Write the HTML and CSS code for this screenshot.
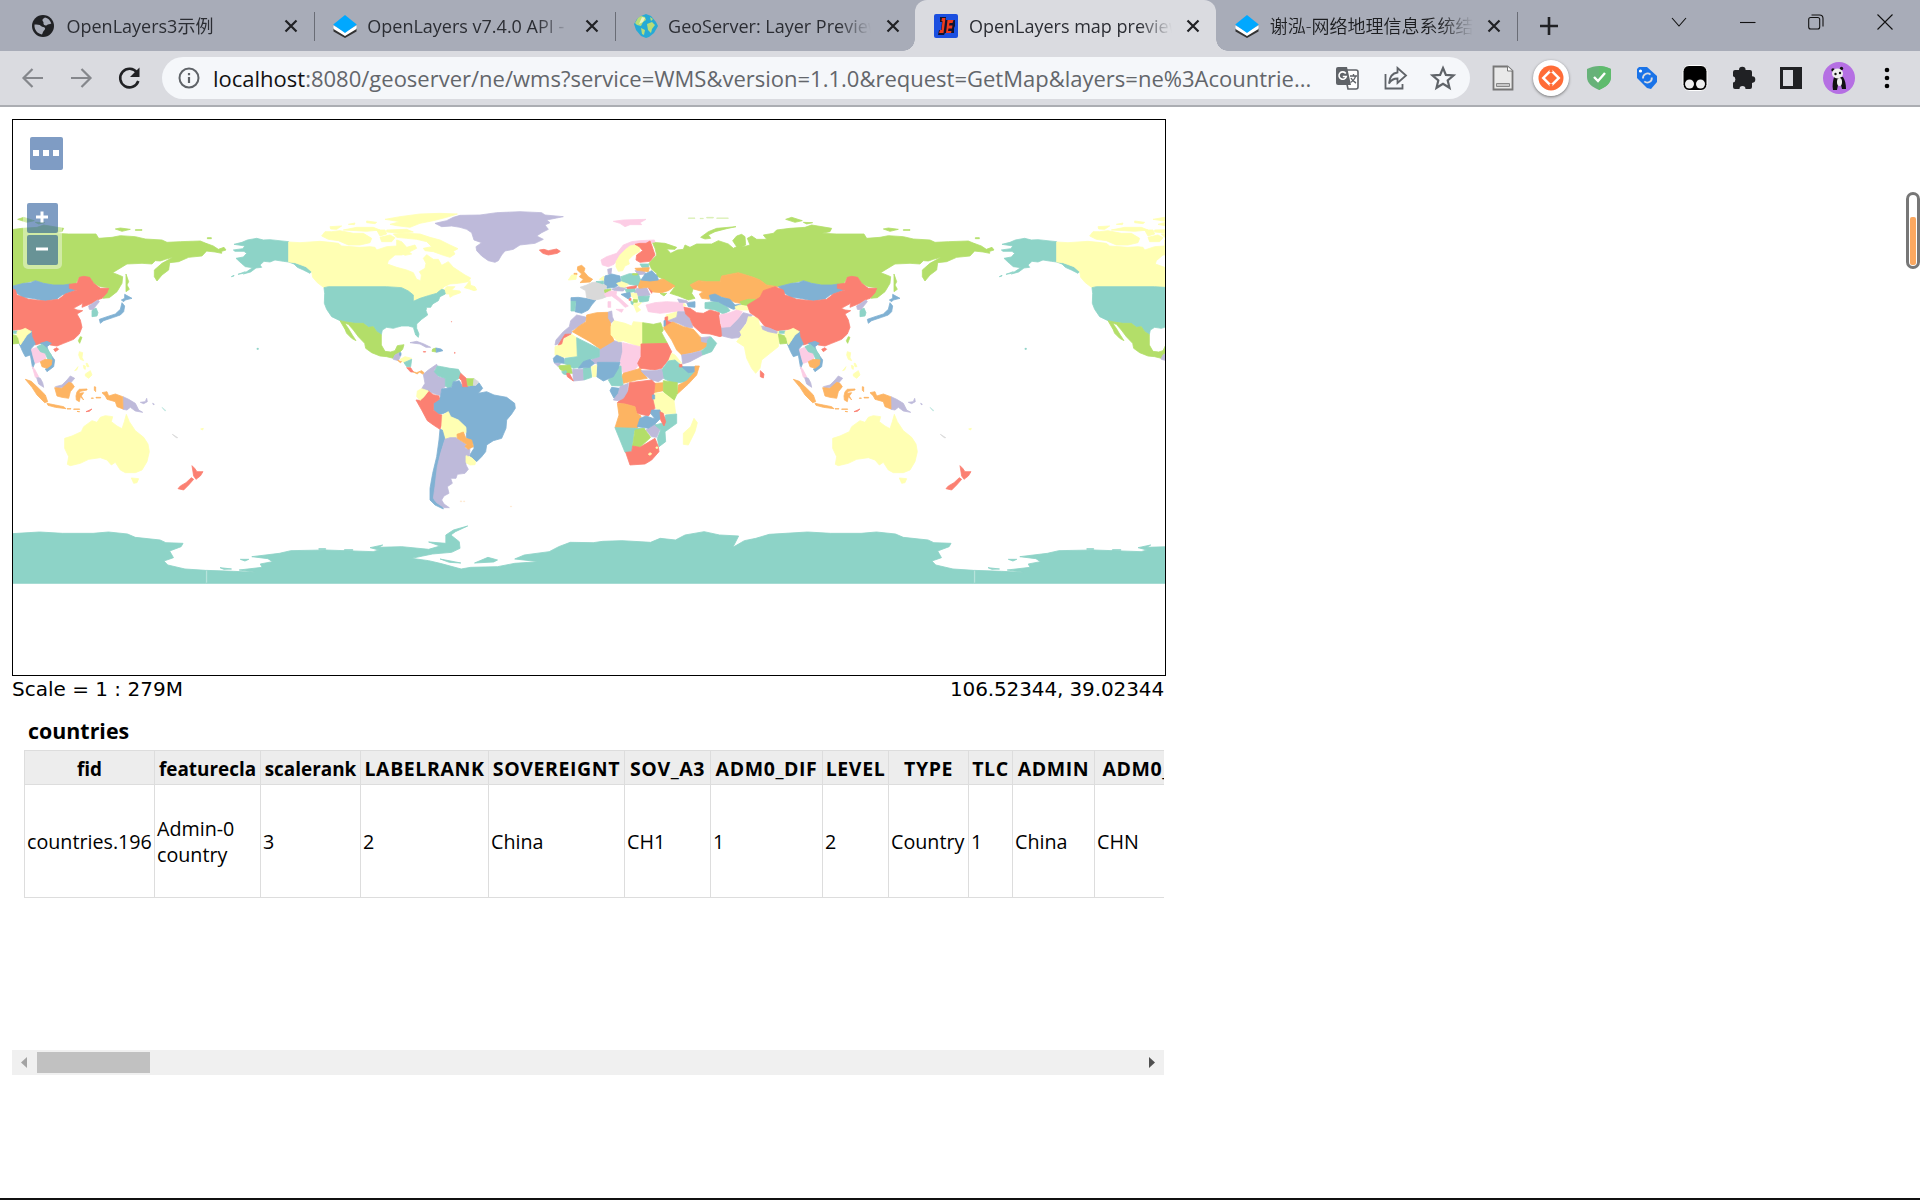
FILE: index.html
```html
<!DOCTYPE html>
<html lang="zh-CN">
<head>
<meta charset="utf-8">
<title>OpenLayers map preview</title>
<link rel="stylesheet" href="styles.css">
</head>
<body>
<svg width="0" height="0" class="defs">
  <symbol id="close" viewBox="0 0 14 14"><path d="M1.5 1.5l11 11M12.500 1.500l-11 11" fill="none" stroke="#202124" stroke-width="2.200"/></symbol>
  <symbol id="ol" viewBox="0 0 24 24"><path d="M.5 14v3.500L12 24l11.500-6.500V14L12 20.500z" fill="#333"/><path d="M.5 11.500v3.500L12 22l11.500-7v-3.500L12 18z" fill="#fff"/><path d="M12 1l11.800 9.500L12 19 .2 10.500z" fill="#00a8ff"/></symbol>
</svg>
<header class="browser">
  <div class="tabs">
    <div class="tab">
      <svg class="fav" viewBox="0 0 24 24"><circle cx="11" cy="12" r="11" fill="#202124"/><path d="M2.500 10.500c2.500.2 5-.3 6.500 1.500 1.500 1.500 3 .5 4 2 .8 1.500-1.500 2.500-2 4-.3 1-.5 1.700-1 2.500-4.500-.8-8-4.500-7.500-10zM13 3.500c3 .6 5.500 3 6.300 6-1.600 1.200-3.300.2-4.300 1.500-1.500 1.500-4-.5-3.500-2 .6-1.300-1.500-1.600-1-3.300.4-1 1.500-1.500 2.500-2.200z" fill="#a8acb8"/></svg>
      <span class="title t1">OpenLayers3示例</span><svg class="x"><use href="#close"/></svg>
    </div>
    <div class="tab">
      <svg class="fav"><use href="#ol"/></svg>
      <span class="title t2">OpenLayers v7.4.0 API - Class</span><svg class="x"><use href="#close"/></svg>
    </div>
    <div class="tab nosep">
      <svg class="fav" viewBox="0 0 24 24"><path d="M7 2l5-2 5 2 5 6 2 4-4 7-5 4-3 1-5-2-5-6-2-6 3-5z" fill="#26aad6"/><path d="M7 2l4 1 1 3-3 2-2 4-4-1-2-2 3-5zM13 10l5-2 3 3-3 4-1 4-3-3zM7 14l4 2-1 5-2-1zM16 3l3 2-2 2z" fill="#b9dc78"/><path d="M8 3l3 1-2 4-4 2z" fill="#e9f4c0"/></svg>
      <span class="title t3">GeoServer: Layer Preview</span><svg class="x"><use href="#close"/></svg>
    </div>
    <div class="tab active">
      <svg class="fav" viewBox="0 0 24 24"><rect width="24" height="24" rx="2" fill="#1b4fe0"/><path d="M6 3h6v3h9v6l-1 2v5H11l-1 2H4l1-5h2l1-8H6z" fill="#101430"/><path d="M8 4h3.500l-2 15H5l1-3h1.500l1-9H7.500zM13.500 6h6l-1 3h-3l-.5 2.500h3.500l-.5 3h-3.500l-.5 2.500h3.500l-.5 2h-5z" fill="#ee3a1c"/></svg>
      <span class="title t4">OpenLayers map preview</span><svg class="x"><use href="#close"/></svg>
    </div>
    <div class="tab">
      <svg class="fav"><use href="#ol"/></svg>
      <span class="title t5">谢泓-网络地理信息系统结课</span><svg class="x"><use href="#close"/></svg>
    </div>
    <svg class="plus" viewBox="0 0 18 18"><path d="M9 0v18M0 9h18" stroke="#202124" stroke-width="2.600"/></svg>
    <div class="winbtns">
      <svg width="16" height="10"><path d="M1 1l7 8 7-8" /></svg>
      <svg width="16" height="10"><path d="M0 5.500h15.500"/></svg>
      <svg width="16" height="16"><rect x=".7" y="3.500" width="11" height="11.500" rx="2"/><path d="M3.500 1h8c2 0 3.500 1.500 3.500 3.500v8"/></svg>
      <svg width="16" height="16"><path d="M.5.5l15 15M15.500.5l-15 15"/></svg>
    </div>
  </div>
  <div class="toolbar">
    <svg class="ic" viewBox="0 0 28 28"><path d="M24 14H5M13.500 5L4.500 14l9 9" class="nav"/></svg>
    <svg class="ic" viewBox="0 0 28 28"><path d="M4 14h19M14.500 5l9 9-9 9" class="nav"/></svg>
    <svg class="ic" viewBox="0 0 28 28"><path d="M22 8.500A9.300 9.300 0 1 0 23.300 17" fill="none" stroke="#202124" stroke-width="2.600"/><path d="M24.500 3.500v9.500h-9.500z" fill="#202124"/></svg>
    <div class="omni">
      <svg class="info" viewBox="0 0 22 22"><circle cx="11" cy="11" r="9.500" fill="none" stroke="#5f6368" stroke-width="2"/><path d="M11 10v6M11 6v2.200" stroke="#5f6368" stroke-width="2.200"/></svg>
      <span class="url"><b>localhost</b>:8080/geoserver/ne/wms?service=WMS&amp;version=1.1.0&amp;request=GetMap&amp;layers=ne%3Acountrie...</span>
      <svg class="ic" viewBox="0 0 28 28"><path d="M11 6h12a2 2 0 0 1 2 2v15a2 2 0 0 1-2 2h-8z" fill="#fff" stroke="#5f6368" stroke-width="1.600"/><path d="M5 3h9l4 18H5a2 2 0 0 1-2-2V5a2 2 0 0 1 2-2z" fill="#5f6368"/><path d="M12.800 9.500a3.700 3.700 0 1 0 .5 3h-3.500" fill="none" stroke="#fff" stroke-width="1.600"/><path d="M17 12h7M20.500 10v2M22.500 12c-.5 3-2.500 5-5 6.500M18 14c1 2 3 4 5 5" fill="none" stroke="#5f6368" stroke-width="1.400"/></svg>
      <svg class="ic" viewBox="0 0 28 28"><path d="M4.500 10v14.500h17V20" fill="none" stroke="#5f6368" stroke-width="1.800"/><path d="M16.500 4l8.500 7.500-8.500 7.500v-4.500c-4 0-6.500 1.500-8.500 5 .5-6 3.500-10.500 8.500-11z" fill="none" stroke="#5f6368" stroke-width="1.800"/></svg>
      <svg class="ic" viewBox="0 0 28 28"><path d="M14 4l2.900 6.900 7.600.6-5.800 4.900 1.800 7.400-6.500-4-6.500 4 1.800-7.400-5.800-4.900 7.600-.6z" fill="none" stroke="#5f6368" stroke-width="2.200"/></svg>
    </div>
    <svg class="ic" viewBox="0 0 28 28"><path d="M4.500 2.500h14l5 4.500v18.500h-19z" fill="#e9e9e9" stroke="#777" stroke-width="1.800"/><path d="M18.500 2.500v4.500h5" fill="#fff" stroke="#777"/><path d="M7.500 19.500h13v3h-13z" fill="#c8c8c8" stroke="#888"/></svg>
    <svg class="round" viewBox="0 0 36 36"><circle cx="18" cy="18" r="18" fill="#fff"/><circle cx="18" cy="18" r="12.500" fill="#ff6c37"/><path d="M18 8.500l9.500 9.500-9.500 9.500L8.500 18z" fill="#fff"/><path d="M18 12l6 6-6 6-6-6z" fill="#ff6c37"/><path d="M18 6v6M18 24v6" stroke="#ff6c37" stroke-width="3"/></svg>
    <svg class="ic" viewBox="0 0 28 28"><path d="M14 2c4 0 8 1 12 3v8c0 6-5 10-12 13C7 23 2 19 2 13V5c4-2 8-3 12-3z" fill="#67b279"/><path d="M14 2c4 0 8 1 12 3v8c0 6-5 10-12 13z" fill="#5fbb6d"/><path d="M9 13l4 4 7-8" fill="none" stroke="#fff" stroke-width="2.400"/></svg>
    <svg class="ic" viewBox="0 0 28 28"><path d="M4 5l2-2h8l10 9v6l-6 7-4-1L4 14z" fill="#1a73e8"/><circle cx="7.500" cy="7" r="1.600" fill="#fff"/><path d="M10 14.500a4.500 4.500 0 0 1 7.500-3.800M18.800 13.500a4.500 4.500 0 0 1-7.500 3.800" fill="none" stroke="#dadbe0" stroke-width="1.800"/></svg>
    <svg class="ic" viewBox="0 0 28 28"><rect x="2" y="1.500" width="24" height="25" rx="6" fill="#000" stroke="#fff"/><circle cx="8.500" cy="20" r="4.500" fill="#eee"/><circle cx="19.500" cy="20" r="4.500" fill="#eee"/></svg>
    <svg class="ic" viewBox="0 0 28 28"><path d="M10 6a3.300 3.300 0 0 1 6.600 0h4.400a2 2 0 0 1 2 2v4.300a3.300 3.300 0 0 1 0 6.600v4.100a2 2 0 0 1-2 2h-4.500a3 3 0 0 0-6 0H6a2 2 0 0 1-2-2v-4.500a3.200 3.200 0 0 0 0-6.200V8a2 2 0 0 1 2-2z" fill="#202124"/></svg>
    <svg class="ic" viewBox="0 0 28 28"><path d="M3 3h22v22H3zM6 6v16h10V6z" fill="#202124" fill-rule="evenodd"/></svg>
    <svg class="ic big" viewBox="0 0 32 32"><circle cx="16" cy="16" r="16" fill="#b56fe3"/><path d="M11 15h9c2 3 3 7 3 12h-4l-1-4h-3l-1 5h-4c-1-5 0-9 1-13z" fill="#111"/><ellipse cx="16.500" cy="20" rx="2.500" ry="4" fill="#eee"/><circle cx="10" cy="8" r="1.700" fill="#111"/><circle cx="18.500" cy="6.500" r="1.700" fill="#111"/><ellipse cx="14.500" cy="11.500" rx="5.500" ry="5" fill="#eee"/><circle cx="12.500" cy="12" r="1.200" fill="#111"/><circle cx="17" cy="11" r="1.200" fill="#111"/></svg>
    <svg class="ic" viewBox="0 0 28 28"><circle cx="14" cy="6" r="2.300"/><circle cx="14" cy="14" r="2.300"/><circle cx="14" cy="22" r="2.300"/></svg>
  </div>
</header>
<main>
  <section class="map">
    <svg class="world" viewBox="13 120 1152 555" width="1152" height="555">
      <defs>
      <g id="world">
        <g transform="translate(220 190) scale(.33333)">
          <path class="tl" d="M42 163L66 157 82 150 110 145 130 150 150 149 206 155 206 216 190 214 165 210 150 216 132 214 120 225 125 232 108 234 92 246 70 252 98 233 76 230 64 220 48 205 70 201 80 190 72 184 45 184 40 180 68 176 75 168ZM206 216L225 218 240 222 258 230 275 245 270 250 250 240 232 232 222 222ZM34 260l8-4v2zM54 253l22-8-6 5zM111 475h4v3h-4z"/>
          <path class="gn" d="M-42 160L-20 168-5 178 12 172 18 180 5 184 5 190-15 186-42 183ZM-38 143h12v3h-12z"/>
          <path class="ye" d="M206 156L240 158 300 154 330 157 355 160 365 168 420 172 450 170 465 172 470 180 500 170 530 168 530 150 545 155 560 172 585 165 590 175 560 190 545 195 525 195 505 212 502 222 530 232 560 240 580 248 590 268 602 272 604 255 598 245 615 235 618 220 610 205 620 194 640 208 655 208 665 226 685 215 700 232 720 245 735 255 752 264 745 275 715 280 690 282 672 290 665 300 650 310 625 317 600 325 580 334 580 315 565 303 545 293 500 290 325 290 312 293 292 278 278 262 275 245 258 230 225 218 206 216Z"/>
          <path class="ye" d="M680 290L705 290 695 300 720 303 722 308 700 316 690 322 688 312 678 312 672 300ZM750 272L740 285 733 293 748 297 762 302 770 300 765 290 752 286ZM520 132L560 130 600 132 630 142 660 150 690 165 714 176 700 184 705 192 690 202 670 196 640 185 615 182 610 175 635 170 620 155 590 148 560 145 530 142ZM335 125L360 122 400 130 430 130 455 145 450 158 420 165 385 165 355 152 325 148 305 138 315 125ZM495 88L540 80 600 72 660 70 712 72 680 82 640 92 600 100 570 112 530 107 510 103 540 95ZM330 110L365 108 350 118 332 117ZM385 103l20-4-2 5zM440 93l30 4-5 4-25-3zM370 120l40-8 50 0 20 8-40 4-30-2zM470 120l25 0 5 12-20 6zM500 120l60-2 20 8-40 4-40-4zM480 142l30-7 15 8-10 12-30 0zM538 185l22-5 15 12-20 4z"/>
          <path class="tl" d="M312 293L325 290 500 290 545 293 565 303 580 315 580 334 600 325 625 317 650 310 658 303 665 298 673 300 676 312 660 320 655 332 638 342 632 352 620 352 618 362 623 375 605 388 590 402 590 415 597 432 595 442 587 435 580 412 565 408 545 408 530 412 520 415 500 412 487 420 484 434 470 425 460 410 445 412 430 400 405 400 378 396 360 392 335 380 320 358 313 340 314 310Z"/>
          <path class="gn" d="M360 392L378 396 405 400 430 400 445 412 460 410 470 425 484 434 484 465 495 484 512 486 525 482 532 467 552 464 548 478 538 488 525 495 520 505 500 500 480 498 455 488 437 475 434 460 415 440 400 420 385 403 374 400 385 415 395 432 408 452 395 445 380 430 375 418ZM638 477l10-3v12l-12-2z"/>
          <path class="pu" d="M520 505L525 495 538 488 542 497 535 512 520 508ZM570 458L590 454 610 461 632 472 618 472 600 462Z"/>
          <path class="ye" d="M540 508L555 500 575 505 562 512 552 518Z"/><path class="tl" d="M552 518L575 508 572 530 560 530Z"/>
          <path class="og" d="M533 511l12 4-4 3zM578 545L590 548 605 542 612 548 610 553 598 546 592 552Z"/>
          <path class="rd" d="M560 533L572 533 580 546 572 546ZM610 485h7v1h-7zM694 395h1v1h-1zM704 487h1v3h-1z"/>
          <path class="bl" d="M648 474l15 3 6 5-20 5zM539 488h4v8h-4z"/>
          <path class="rd" d="M958 180L972 178 985 182 1010 177 1021 184 1012 190 985 195 968 190Z"/>
          <path class="pu" d="M645 100L680 92 700 82 720 76 780 75 830 68 900 65 965 68 975 75 1030 80 1010 84 980 90 990 98 975 105 985 118 965 128 950 138 970 148 945 160 900 165 880 178 855 183 845 195 835 212 825 217 805 212 785 198 770 182 768 170 785 158 762 150 755 128 740 118 720 112 695 108 665 110Z"/>
          <path class="pu" d="M610 553L625 540 650 523 652 528 643 540 655 560 676 565 676 590 665 597 662 617 640 610 625 603 605 596 615 580Z"/>
          <path class="tl" d="M652 528L665 530 690 535 715 538 722 550 718 565 700 575 695 590 685 594 676 588 676 565 655 558 643 545Z"/>
          <path class="bl" d="M662 617L665 597 685 594 695 592 700 575 718 572 728 590 743 590 760 586 768 586 777 578 788 595 775 610 800 605 822 615 860 622 884 640 886 655 875 672 860 690 858 715 845 745 820 752 800 765 797 785 785 800 770 815 748 797 762 775 760 762 745 748 740 745 738 712 715 690 692 680 685 665 665 672 655 672 640 660 640 640 658 628Z"/>
          <path class="rd" d="M722 550L740 566 743 590 728 590 725 572 718 565Z"/><path class="gn" d="M740 566L762 566 760 586 743 587Z"/><path class="gy" d="M762 566L775 575 768 586 760 586Z"/>
          <path class="rd" d="M625 603L640 614 657 618 658 628 640 640 640 660 655 672 667 676 665 705 660 718 640 705 622 692 605 660 588 630 600 631 612 620Z"/>
          <path class="ye" d="M605 596L625 603 612 620 600 631 590 620 592 603ZM667 676L685 665 692 680 715 690 738 712 738 728 718 728 708 745 690 743 675 748 665 715Z"/>
          <path class="bl" d="M660 718L667 720 675 748 662 790 655 820 648 870 645 905 643 930 665 942 670 957 645 945 630 930 630 895 638 850 650 800 657 750Z"/>
          <path class="pu" d="M675 748L690 743 708 743 738 763 735 775 750 778 748 797 738 810 738 825 745 838 735 850 712 853 708 865 692 865 697 880 682 890 687 910 672 918 665 930 672 942 688 953 672 953 650 938 640 925 645 890 652 830 662 790Z"/>
          <path class="og" d="M711 733L730 726 738 745 755 750 760 770 745 778 735 770 740 763 712 745Z"/>
          <path class="ye" d="M738 797L755 803 767 815 765 824 750 825 738 818Z"/>
          <path class="og" opacity=".3" d="M721 933h4v2h-4zM731 933h3v2h-3zM871 949h4v1h-4z"/>
        </g>
        <g transform="translate(640 190) scale(.33333)">
          <path class="gn" d="M37 157L75 160 110 172 105 178 80 177 92 190 112 180 130 178 135 165 150 172 170 162 215 162 235 152 265 162 280 175 290 170 278 152 290 138 305 133 315 140 317 165 305 172 330 165 322 145 335 138 350 148 380 148 370 135 400 130 410 120 450 115 495 112 515 105 575 115 570 125 545 130 590 132 672 132 680 145 720 142 745 137 790 140 820 147 870 150 885 157 925 155 985 153 1002 160 1002 185 990 198 950 202 920 215 893 218 890 240 870 255 855 273 847 260 847 240 870 220 903 202 880 208 865 213 850 212 840 222 810 220 765 222 722 248 740 255 752 260 750 280 735 305 712 323 692 325 700 308 710 293 685 290 665 280 655 265 635 260 620 265 610 283 575 285 545 285 515 280 490 272 475 275 455 280 415 290 380 285 360 270 340 262 295 248 245 258 240 275 200 275 175 272 150 285 160 295 155 310 165 325 145 330 115 318 90 310 105 290 70 268 50 258 50 250 35 238 27 220 45 200 50 195 45 175Z"/>
          <path class="gn" d="M182 142L205 125 230 115 288 110 260 116 225 125 205 135 212 145 195 147ZM437 88L455 82 487 92 465 97ZM490 97L518 98 500 102ZM730 117L745 114 775 118 750 124ZM790 119h20v2h-20zM762 252L770 275 765 285 772 298 762 305 762 280Z"/>
          <path class="gn" opacity=".5" d="M145 84h20v1h-20zM180 85h10v1h-10zM200 82h20v2h-20zM230 84h35v1h-35z"/>
          <path class="og" d="M150 285L175 272 200 275 240 275 245 258 295 248 340 262 360 270 380 285 412 290 395 303 370 308 362 328 320 330 300 340 285 337 250 322 215 314 208 328 185 325 178 312 190 305 160 297Z"/>
          <path class="tl" d="M195 338L235 333 262 352 270 362 250 372 225 360 195 355Z"/>
          <path class="bl" d="M208 316L225 312 245 322 270 328 285 345 305 342 290 355 280 358 262 350 235 335 212 332ZM415 290L455 280 475 278 490 272 515 280 545 285 575 285 595 282 595 295 615 298 600 305 570 315 555 327 520 333 480 325 450 322 430 305Z"/>
          <path class="gn" d="M300 335L325 328 362 328 340 342 325 348 305 345Z"/><path class="ye" d="M285 350L300 345 325 350 328 360 300 360 290 362Z"/>
        </g>
        <g transform="translate(540 200) scale(.33333)">
          <path class="pk" d="M183 180L200 170 230 160 250 135 275 125 300 122 343 120 345 126 318 130 300 133 270 138 255 150 240 165 228 185 222 193 205 200 187 195ZM220 64L250 60 318 58 300 68 305 74 270 74 255 80 240 70Z"/>
          <path class="ye" d="M228 185L240 165 255 150 270 138 295 133 300 145 298 155 280 165 265 180 268 192 255 198 248 212 235 214 228 200Z"/>
          <path class="rd" d="M285 133L300 130 318 130 330 123 335 135 345 165 330 184 300 187 288 180 290 165 308 152 298 140Z"/>
          <path class="og" d="M113 200L125 196 135 205 132 215 145 230 158 238 150 246 120 248 130 238 118 230 125 222 112 210ZM102 220h9v4h-9z"/>
          <path class="ye" d="M85 240L95 225 110 225 108 238ZM178 238L192 228 193 242Z"/>
          <path class="pu" d="M203 208L215 205 213 222 205 222ZM215 268L235 260 258 262 250 273 225 272ZM290 265L320 263 330 285 300 292 283 278ZM285 212L310 210 318 222 295 224Z"/>
          <path class="bl" d="M195 228L215 222 240 228 243 250 225 262 200 265 192 250ZM93 293L115 292 168 300 155 315 145 330 125 340 105 335 108 308 93 304Z"/>
          <path class="gy" d="M120 262L140 255 155 248 170 246 190 253 200 258 197 272 200 290 185 296 165 300 140 293 137 272Z"/>
          <path class="tl" d="M168 245L190 243 190 252ZM93 304L107 304 104 333 93 333ZM243 230L268 221 295 222 302 240 298 258 268 253 245 245ZM255 268L285 263 285 275 260 278ZM293 290L328 288 325 303 300 307ZM300 192h26v10h-20zM272 302l8 5v8l-6-3z"/>
          <path class="gn" d="M193 270L212 267 212 275 195 278ZM280 298h12v9h-12zM360 280h20l-8 8zM278 221h14v4h-14z"/>
          <path class="pk" d="M193 282L210 273 230 274 228 285 245 300 265 318 255 322 248 315 235 302 215 288 198 290ZM228 328L250 328 245 337ZM204 305h8v17h-8zM318 315L345 308 380 305 430 308 435 332 400 335 360 340 325 335Z"/>
          <path class="ye" d="M230 250L245 245 265 253 255 262 240 260ZM270 280L290 280 293 297 280 295ZM280 312L305 308 292 320 302 330 290 337ZM378 345L413 335 410 352 385 362ZM432 310l6 8h-8z"/>
          <path class="rd" d="M260 262L290 257 288 264 262 266ZM325 263L340 268 335 280ZM375 352L383 350 383 362 398 368 385 383 375 383ZM267 295h6v6h-6z"/>
          <path class="og" d="M295 258L303 240 355 240 370 237 405 258 385 272 365 278 340 276 325 262 297 265ZM285 205L328 203 325 215 290 211Z"/>
          <path class="bl" d="M303 240L315 222 335 212 352 228 355 240 330 243ZM243 283L270 277 272 290 265 297ZM440 308L465 305 465 322 445 320ZM372 362l4 0v18l-4 0z"/>
          <path class="pu" d="M413 297L440 302 445 308 418 307ZM413 335L435 335 455 365 458 383 440 382 415 370 385 362 410 352Z"/>
          <path class="rd" d="M432 322L450 325 470 338 490 340 510 330 538 338 540 370 552 405 540 410 510 402 485 400 460 378 450 355 437 342Z"/>
          <path class="pu" d="M545 382L570 380 595 355 610 338 637 345 620 365 600 395 605 412 575 415 547 408Z"/>
          <path class="pk" d="M538 345L570 338 590 330 607 335 595 355 570 380 545 382Z"/>
          <path class="og" d="M370 383L398 366 430 380 460 388 480 410 503 430 500 440 480 452 455 458 425 465 410 450 395 420Z"/>
          <path class="pu" d="M425 465L455 460 485 452 488 465 450 485 428 492ZM483 413L510 410 503 428 485 425Z"/><path class="tl" d="M485 452L500 440 503 420 512 410 530 430 515 455 488 465Z"/>
          <path class="ye" d="M625 350L655 352 658 375 690 392 718 395 720 405 715 440 690 460 665 480 660 505 647 520 635 505 620 475 613 440 590 425 605 405 600 395 620 370Z"/>
          <path class="rd" d="M661 512L672 522 670 534 661 530Z"/>
          <path class="pu" d="M110 345L140 352 135 365 118 378 95 392 95 400 75 405 60 430 45 435 48 420 70 395 88 380 92 362ZM203 337L215 333 217 350 222 362 212 370 202 355ZM178 447L222 422 245 428 248 455 240 485 180 488 160 492 155 478 178 470Z"/>
          <path class="og" d="M140 345L170 338 203 337 203 355 212 370 213 400 222 422 180 447 150 425 97 395 118 378 138 365Z"/>
          <path class="ye" d="M222 362L255 370 275 378 280 365 308 368 308 443 250 422 235 425 213 405 213 380ZM45 440L65 432 75 415 95 403 110 413 112 470 60 472 45 465Z"/>
          <path class="rd" d="M75 403L93 402 70 415 65 432 55 435Z"/>
          <path class="gn" d="M308 368L340 373 362 368 370 390 365 398 382 430 308 432Z"/>
          <path class="tl" d="M110 413L178 447 178 470 145 480 130 500 100 505 72 490 75 475 112 470Z"/>
          <path class="pk" d="M248 428L300 440 303 470 295 495 285 510 250 520 240 490 248 455Z"/>
          <path class="rd" d="M303 432L382 430 395 455 385 480 365 505 345 510 300 505 293 490 303 470Z"/>
          <path class="ye" d="M395 460L405 465 425 490 400 480 385 485Z"/>
          <path class="tl" d="M385 483L405 480 428 500 465 518 440 545 400 550 370 535 365 510Z"/>
          <path class="bl" d="M425 500L465 500 465 515 445 518Z"/><path class="rd" d="M418 493h8v8h-8z"/>
          <path class="og" d="M465 498L478 498 470 525 445 552 412 582 415 555 440 543 465 515ZM345 550L370 548 370 572 342 578ZM250 520L285 510 300 505 322 535 290 540 250 550 245 530Z"/>
          <path class="gn" d="M370 542L412 548 412 580 402 602 370 575ZM55 497L90 495 98 520 80 520 60 508Z"/>
          <path class="pu" d="M303 512L345 512 365 508 370 535 355 545 335 540 315 525ZM98 508L130 508 132 540 100 543ZM42 488l20 3-8 8z"/>
          <path class="tl" d="M230 500L243 498 245 530 250 558 215 557 205 540 225 520ZM130 505L152 502 155 532 132 540ZM65 515L78 512 82 525 70 522Z"/>
          <path class="bl" d="M172 487L240 487 235 505 220 530 190 543 170 530ZM115 505L130 485 150 478 163 490 150 502ZM40 475L50 465 72 475 72 490 42 487ZM210 572L215 562 238 565 238 585 222 595Z"/>
          <path class="ye" d="M155 500L170 495 168 530 158 530ZM345 580L370 578 402 602 407 640 375 642 348 625 340 605Z"/>
          <path class="rd" d="M80 520L88 520 100 543 82 530ZM268 548L335 540 345 550 342 578 338 595 345 625 325 648 290 640 285 620 255 612 232 608 250 590 265 570Z"/>
          <path class="pu" d="M220 600L235 580 240 560 265 550 262 575 250 595 235 602ZM318 690L345 672 360 688 350 712 335 710Z"/>
          <path class="og" d="M232 610L255 612 285 620 290 640 303 648 300 660 292 685 225 683 237 645Z"/>
          <path class="tl" d="M377 645L410 642 410 670 375 695 377 725 357 740 352 715 362 690 345 675 372 668ZM225 683L292 685 315 687 283 692 275 755 255 757 240 720Z"/>
          <path class="bl" d="M292 680L300 655 318 648 345 657 332 640 335 630 360 630 362 655 345 672 325 685ZM337 585l7 0v12l-7 0z"/>
          <path class="gn" d="M285 690L312 685 332 712 300 742 278 738Z"/>
          <path class="rd" d="M360 635L370 640 377 665 372 678 362 660ZM257 757L275 755 278 738 300 742 345 715 355 740 357 755 335 780 315 792 270 795Z"/>
          <path class="ye" d="M462 655L472 668 465 695 445 735 430 733 430 700 452 680ZM325 762l6-4 4 4-6 4zM348 741h5v4h-5z"/>
        </g>
        <g transform="translate(760 220) scale(.33333)">
          <path class="rd" d="M45 200L70 210 75 225 110 238 160 243 200 238 220 222 255 210 232 205 232 193 255 190 262 172 275 169 293 172 305 190 325 205 350 205 345 218 330 235 315 240 300 250 270 262 272 250 244 265 255 270 272 272 255 282 265 300 270 322 262 342 245 358 215 370 195 378 175 375 160 367 140 372 130 375 118 358 120 340 95 328 50 332 15 320-5 295-30 278-38 255 0 232 10 212ZM185 388L195 383 200 388 190 395ZM282 575L300 567 292 574Z"/>
          <path class="gn" d="M265 350L270 352 263 370 259 362ZM55 342L78 348 82 370 60 372Z"/>
          <path class="pu" d="M290 258L318 240 322 245 308 262 305 270 292 268ZM5 318L30 325 52 335 50 340 25 335 8 328ZM133 470L145 475 152 488 155 502 140 492ZM190 500L210 495 225 480 235 468 248 475 235 490 215 502 195 505ZM393 530L410 538 430 550 440 570 452 577 430 573 415 562 405 570 393 568ZM445 547L460 545 464 535 466 545 455 551ZM482 550l5 3-3 1z"/>
          <path class="tl" d="M300 272L312 264 318 278 315 288 300 290ZM58 333h18v7h-18z"/>
          <path class="bl" d="M398 223L420 235 400 240 395 245 388 240 398 235ZM390 248L398 258 395 275 385 285 365 292 335 302 325 310 322 298 345 290 370 282 385 268ZM100 345L118 332 120 350 130 372 118 385 122 405 128 430 122 445 115 405 100 410 92 395 82 372 95 362ZM145 370L165 364 178 370 165 380 170 395 188 420 185 440 165 455 160 447 177 435 178 415 165 395 155 378Z"/>
          <path class="ye" d="M75 335L100 325 118 335 105 345 95 360 85 375 80 355 75 348Z"/>
          <path class="pk" d="M118 388L135 382 142 393 162 400 160 418 145 425 130 430 125 415ZM121 440L128 448 140 470 130 472Z"/>
          <path class="tl" d="M135 380L150 373 165 385 178 405 180 420 168 420 160 400 145 395Z"/><path class="tl" opacity=".5" d="M510 562l12 10-4 0z"/>
          <path class="og" d="M145 425L160 418 180 420 178 435 165 445 150 440ZM188 503L210 505 230 487 240 490 247 500 235 515 230 535 210 532 195 528ZM100 478L118 484 140 505 160 525 167 545 158 548 135 525 120 502ZM165 550L190 555 215 560 222 566 190 562 168 556ZM225 566h12v1h-12zM245 567h18v1h-18zM255 574l8 1h-5zM255 515L262 508 285 507 285 510 265 514 260 520 275 518 268 528 275 540 265 530 262 545 253 540 252 528ZM307 500l4 1 0 14-4-4zM312 532h14v2h-14zM298 534h6v1h-6zM330 518L345 515 350 528 370 522 392 530 393 567 375 560 370 545 345 538 340 528Z"/>
          <path class="ye" d="M262 395L272 398 270 412 275 422 265 418 260 405ZM280 462L295 452 300 465 290 475 280 468ZM282 430l4 0 5 10-6 0zM274 436l6 2 0 10-4-2zM248 452l10-12-4 10z"/>
          <path class="ye" d="M218 655L240 648 268 635 275 620 300 602 315 607 325 592 340 587 362 590 358 605 375 618 390 626 397 605 403 583 412 605 430 632 455 652 468 672 472 695 465 725 450 750 430 758 400 758 385 750 370 727 358 735 345 720 325 713 290 718 265 730 235 737 226 733 230 710 218 685ZM418 774L440 776 435 788 425 790ZM626 627l8-2-2 5z"/>
          <path class="gy" d="M541 643l16 10-4 0z"/>
          <path class="rd" d="M600 737L608 745 615 755 633 755 625 768 612 778 605 768ZM598 773L605 778 590 795 575 810 558 806 565 798 582 788Z"/>
        </g>
        <g transform="translate(0 480) scale(.38271 .33333)">
          <path class="tl" d="M537 271L610 274 668 277 625 270 685 262 680 252 712 245 700 236 658 230 730 220 760 212 850 210 975 215 990 210 967 203 1000 195 990 202 1050 200 1120 208 1150 198 1120 186 1165 190 1165 165 1185 150 1222 138 1190 155 1178 165 1200 185 1202 205 1180 217 1130 222 1075 235 1120 242 1150 250 1205 267 1230 262 1300 260 1345 250 1408 245 1345 237 1370 225 1435 215 1460 200 1490 187 1550 188 1575 184 1625 182 1700 187 1725 175 1765 180 1790 165 1840 155 1880 165 1930 168 1915 202 1945 182 1975 175 2010 163 2110 156 2170 160 2250 160 2290 156 2340 162 2360 172 2425 180 2440 188 2485 190 2480 200 2450 213 2460 233 2435 243 2445 255 2490 267 2543 271 2543 310 537 310ZM1240 249L1275 232 1300 240 1290 246ZM628 238h22l-10 5zM575 263l30 4-20 1zM833 206h18v2h-18zM900 209h22v2h-22zM1150 237l54 12-30-2z"/>
          <path d="M540 272v36" stroke="#fff" stroke-width="3" opacity=".5"/>
        </g>
      </g>
      </defs>
      <use href="#world" x="-768"/><use href="#world"/><use href="#world" x="768"/>
    </svg>
    <div class="opt"><i></i><i></i><i></i></div>
    <div class="zoomer"><div><svg viewBox="0 0 12 12" width="12" height="12"><path d="M6 .5v11M0 6h12"/></svg></div><div><svg viewBox="0 0 12 12" width="12" height="12"><path d="M0 6h12"/></svg></div></div>
  </section>
  <div class="status"><span class="scale">Scale = 1 : 279M</span><span class="loc">106.52344, 39.02344</span></div>
  <section class="info-panel">
    <table>
      <caption>countries</caption>
      <colgroup><col class="w130"><col class="w106"><col class="w100"><col class="w128"><col class="w136"><col class="w86"><col class="w112"><col class="w66"><col class="w80"><col class="w44"><col class="w82"><col class="w110"></colgroup>
      <tr><th class="lower">fid</th><th class="lower">featurecla</th><th class="lower">scalerank</th><th>LABELRANK</th><th>SOVEREIGNT</th><th>SOV_A3</th><th>ADM0_DIF</th><th>LEVEL</th><th>TYPE</th><th>TLC</th><th>ADMIN</th><th>ADM0_A3</th></tr>
      <tr><td>countries.196</td><td>Admin-0 country</td><td>3</td><td>2</td><td>China</td><td>CH1</td><td>1</td><td>2</td><td>Country</td><td>1</td><td>China</td><td>CHN</td></tr>
    </table>
  </section>
  <div class="hscroll"><svg viewBox="0 0 25 25"><path d="M15 7v11l-6-5.500z" fill="#a3a3a3"/></svg><div class="thumb"></div><svg class="end" viewBox="0 0 25 25"><path d="M10 7v11l6-5.500z" fill="#505050"/></svg></div>
</main>
<div class="gauge"><div></div></div>
<div class="bottom"></div>
</body>
</html>
```
FILE: styles.css
```css
* { box-sizing: border-box; }
body { margin: 0; width: 1920px; height: 1200px; overflow: hidden; background: #fff; color: #000; font-family: "Open Sans", "Noto Sans CJK SC", sans-serif; position: relative; }
.defs { position: absolute; }
svg { display: block; flex: none; }
.browser { height: 107px; border-bottom: 2px solid #abadb2; background: #dadbe0; }
.tabs { height: 51px; background: #a8acb8; display: flex; padding-left: 13px; position: relative; }
.tab { width: 300.8px; height: 51px; display: flex; align-items: center; padding-left: 19px; position: relative; }
.tab::after { content: ""; position: absolute; right: -1px; top: 12px; width: 1px; height: 29px; background: #696c75; }
.tab.nosep::after { display: none; }
.tab.active { background: #dadbe0; border-radius: 12px 12px 0 0; }
.tab.active::after, .tab.active::before { content: ""; position: absolute; bottom: 0; top: auto; width: 12px; height: 12px; }
.tab.active::before { left: -12px; background: radial-gradient(circle at 0 0, transparent 11.5px, #dadbe0 12px); }
.tab.active::after { right: -12px; background: radial-gradient(circle at 100% 0, transparent 11.5px, #dadbe0 12px); }
.fav { width: 24px; height: 24px; }
.title { margin-left: 10.5px; width: 205.5px; font-size: 18px; line-height: 30px; color: #2b2d33; white-space: nowrap; overflow: hidden; -webkit-mask-image: linear-gradient(90deg, #000 170px, transparent 203px); mask-image: linear-gradient(90deg, #000 170px, transparent 203px); }
.t5 { font-weight: 350; color: #1c1d20; }
.x { width: 14px; height: 14px; margin-left: 12px; }
.plus { width: 18px; height: 18px; margin: 17px 0 0 23px; }
.winbtns { position: absolute; right: 27px; top: 14px; height: 16px; width: 222px; display: flex; justify-content: space-between; align-items: center; }
.winbtns path, .winbtns rect { fill: none; stroke: #111; stroke-width: 1.1; }
.toolbar { height: 54px; display: flex; align-items: center; gap: 20px; padding-left: 19px; }
.ic { width: 28px; height: 28px; }
.nav { fill: none; stroke: #85878c; stroke-width: 2.2; }
.omni { width: 1308px; height: 42px; border-radius: 21px; background: #f5f7fa; margin: 0 -1px; display: flex; align-items: center; gap: 20px; padding: 0 13px 0 16px; }
.info { width: 22px; height: 22px; }
.url { flex: 1; margin-left: -7px; font-size: 22px; line-height: 32px; color: #63666b; white-space: nowrap; overflow: hidden; }
.url b { font-weight: 400; color: #111; }
.round { width: 36px; height: 36px; margin: 0 -4px; border-radius: 50%; box-shadow: 0 1px 3px #777; }
.big { width: 32px; height: 32px; margin: 0 -2px; }
main { padding: 12px 0 0 12px; width: 1166px; }
.map { width: 1154px; height: 557px; border: 1px solid #000; position: relative; overflow: hidden; }
.world path { stroke-width: 2.4; stroke-linejoin: round; }
.tl { fill: #8dd3c7; stroke: #8dd3c7; }
.ye { fill: #ffffb3; stroke: #ffffb3; }
.pu { fill: #bebada; stroke: #bebada; }
.rd { fill: #fb8072; stroke: #fb8072; }
.bl { fill: #80b1d3; stroke: #80b1d3; }
.og { fill: #fdb462; stroke: #fdb462; }
.gn { fill: #b3de69; stroke: #b3de69; }
.pk { fill: #fccde5; stroke: #fccde5; }
.gy { fill: #d9d9d9; stroke: #d9d9d9; }
.opt { position: absolute; left: 17px; top: 17px; width: 33px; height: 33px; border-radius: 2px; background: #7f9cc4; display: flex; align-items: center; justify-content: center; gap: 4px; padding-right: 1px; padding-bottom: 1px; }
.opt i { width: 6px; height: 6px; background: #fff; }
.zoomer { position: absolute; left: 10px; top: 79px; width: 39px; padding: 4px; border-radius: 5px; background: rgba(255,255,255,.4); display: flex; flex-direction: column; gap: 2px; }
.zoomer div { height: 30px; border-radius: 2px; background: rgba(0,60,136,.5); display: flex; align-items: center; justify-content: center; padding: 0 1px 3px 0; }
.zoomer path { stroke: #fff; stroke-width: 3; }
.status { width: 1152px; height: 28px; display: flex; justify-content: space-between; font: 20px/26px "DejaVu Sans", sans-serif; }
.loc { letter-spacing: -.12px; }
.info-panel { width: 1152px; overflow: hidden; height: 346px; padding: 12px 0 0 12px; }
table { border-collapse: collapse; table-layout: fixed; width: 1180px; font-size: 19.7px; }
caption { text-align: left; font-size: 21.4px; font-weight: 700; line-height: 28px; padding: 1px 0 5px 4px; }
th, td { border: 1px solid #ddd; padding: 2px 2px 0; line-height: 26px; white-space: nowrap; }
th { background: #ededed; height: 34px; font-weight: 700; font-size: 19.5px; padding: 2px 0 0; letter-spacing: .6px; }
.lower { font-size: 18.9px; letter-spacing: 0; }
td { height: 113px; text-align: left; }
td:nth-child(2) { white-space: normal; }
.w130 { width: 130px; }
.w106 { width: 106px; }
.w100 { width: 100px; }
.w128 { width: 128px; }
.w136 { width: 136px; }
.w86 { width: 86px; }
.w112 { width: 112px; }
.w66 { width: 66px; }
.w80 { width: 80px; }
.w44 { width: 44px; }
.w82 { width: 82px; }
.w110 { width: 110px; }
.hscroll { width: 1152px; height: 25px; background: #f0f0f0; display: flex; align-items: center; }
.hscroll svg { width: 25px; height: 25px; }
.thumb { width: 113px; height: 21px; background: #c1c1c1; }
.hscroll .end { margin-left: auto; }
.gauge { position: absolute; right: 0; top: 192px; width: 14px; height: 77px; border: 3px solid #777; border-radius: 7px; background: #fff; padding: 22px 1px 1px; }
.gauge div { height: 100%; background: #fba860; border-radius: 2px; }
.bottom { position: absolute; left: 0; right: 0; bottom: 0; height: 2px; background: #111; }
```
